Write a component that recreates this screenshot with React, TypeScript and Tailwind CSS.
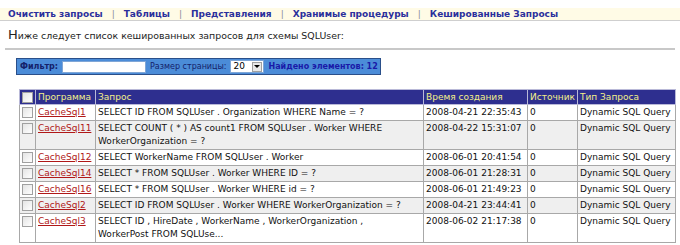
import React from 'react';

const rows = [
  { name: 'CacheSql1', query: 'SELECT ID FROM SQLUser . Organization WHERE Name = ?', time: '2008-04-21 22:35:43' },
  { name: 'CacheSql11', query: 'SELECT COUNT ( * ) AS count1 FROM SQLUser . Worker WHERE WorkerOrganization = ?', time: '2008-04-22 15:31:07' },
  { name: 'CacheSql12', query: 'SELECT WorkerName FROM SQLUser . Worker', time: '2008-06-01 20:41:54' },
  { name: 'CacheSql14', query: 'SELECT * FROM SQLUser . Worker WHERE ID = ?', time: '2008-06-01 21:28:31' },
  { name: 'CacheSql16', query: 'SELECT * FROM SQLUser . Worker WHERE id = ?', time: '2008-06-01 21:49:23' },
  { name: 'CacheSql2', query: 'SELECT ID FROM SQLUser . Worker WHERE WorkerOrganization = ?', time: '2008-04-21 23:44:41' },
  { name: 'CacheSql3', query: 'SELECT ID , HireDate , WorkerName , WorkerOrganization , WorkerPost FROM SQLUse...', time: '2008-06-02 21:17:38' },
];

const navItems = ['Очистить запросы', 'Таблицы', 'Представления', 'Хранимые процедуры', 'Кешированные Запросы'];

function Checkbox() {
  return <span className="inline-block w-[11px] h-[11px] border border-[#a0a0a0] bg-gradient-to-br from-[#e4e4e4] to-white align-middle" />;
}

export default function App() {
  return (
    <div className="w-[680px] h-[245px] overflow-hidden bg-white text-black" style={{ fontFamily: '"DejaVu Sans", Verdana, sans-serif' }}>
      {/* Nav */}
      <div className="mt-[8px] h-[13px] bg-[#fffbe6] border-b border-[#cfcfcf] pl-[8px] flex items-center text-[9px] font-bold text-[#2b2f9c] leading-none whitespace-nowrap">
        {navItems.map((item, i) => (
          <React.Fragment key={item}>
            {i > 0 && <span className="px-[9px] font-normal text-[#8b8b9b]">|</span>}
            <span>{item}</span>
          </React.Fragment>
        ))}
      </div>

      {/* Heading */}
      <div className="pl-[8px] mt-[5px] h-[17px] text-[9.4px] leading-[17px] text-[#222] whitespace-nowrap">
        <span className="text-[13px]">Н</span>иже следует список кешированных запросов для схемы SQLUser:
      </div>
      <div className="mx-[5px] mt-[5px] border-t-2 border-[#c8c8c8]" />

      {/* Filter bar */}
      <div className="ml-[16px] mt-[8px] w-[365px] h-[17px] bg-[#4b8cd8] border border-[#2a4f8a] flex items-center text-[8px] text-[#14216a] leading-none whitespace-nowrap">
        <span className="ml-[3px] font-bold">Фильтр:</span>
        <span className="ml-[4px] w-[84px] h-[12px] bg-white border border-[#7fa6d6] shrink-0" />
        <span className="ml-[4px]">Размер страницы:</span>
        <span className="ml-[3px] w-[34px] h-[13px] bg-white border border-[#7fa6d6] flex items-center justify-between text-black shrink-0">
          <span className="pl-[3px] text-[9px]">20</span>
          <span className="mr-[1px] w-[10px] h-[10px] bg-[#e8e8e8] border border-[#a0a0a0] flex items-center justify-center">
            <span className="w-0 h-0 border-l-[3px] border-r-[3px] border-t-[3px] border-l-transparent border-r-transparent border-t-black" />
          </span>
        </span>
        <span className="ml-[5px] font-bold text-[#1a1aa8]">Найдено элементов: 12</span>
      </div>

      {/* Table */}
      <table className="ml-[19px] mt-[14px] w-[656px] border-collapse text-[9px] leading-[13px] table-fixed">
        <colgroup>
          <col className="w-[16px]" />
          <col className="w-[60px]" />
          <col className="w-[328px]" />
          <col className="w-[104px]" />
          <col className="w-[50px]" />
          <col className="w-[98px]" />
        </colgroup>
        <thead>
          <tr className="bg-[#2e2f8f] text-[#f3f08a] text-left h-[15px]">
            <th className="font-normal border border-[#b9b9d8] text-center px-0 py-0"><Checkbox /></th>
            <th className="font-normal border border-[#b9b9d8] px-[2px] py-0">Программа</th>
            <th className="font-normal border border-[#b9b9d8] px-[2px] py-0">Запрос</th>
            <th className="font-normal border border-[#b9b9d8] px-[2px] py-0">Время создания</th>
            <th className="font-normal border border-[#b9b9d8] px-[2px] py-0">Источник</th>
            <th className="font-normal border border-[#b9b9d8] px-[2px] py-0">Тип Запроса</th>
          </tr>
        </thead>
        <tbody>
          {rows.map((r, i) => (
            <tr key={r.name} className={i % 2 === 1 ? 'bg-[#efefef] align-top' : 'bg-white align-top'}>
              <td className="border border-[#a8a8a8] text-center pt-[1px] pb-[1px]"><Checkbox /></td>
              <td className="border border-[#a8a8a8] px-[2px] pt-[1px] pb-[1px] text-[#b01818] underline whitespace-nowrap">{r.name}</td>
              <td className="border border-[#a8a8a8] pl-[2px] pr-[10px] pt-[1px] pb-[1px] text-[#111]">{r.query}</td>
              <td className="border border-[#a8a8a8] px-[2px] pt-[1px] pb-[1px] text-[#111] whitespace-nowrap">{r.time}</td>
              <td className="border border-[#a8a8a8] px-[2px] pt-[1px] pb-[1px] text-[#111]">0</td>
              <td className="border border-[#a8a8a8] px-[2px] pt-[1px] pb-[1px] text-[#111] whitespace-nowrap">Dynamic SQL Query</td>
            </tr>
          ))}
        </tbody>
      </table>
    </div>
  );
}
